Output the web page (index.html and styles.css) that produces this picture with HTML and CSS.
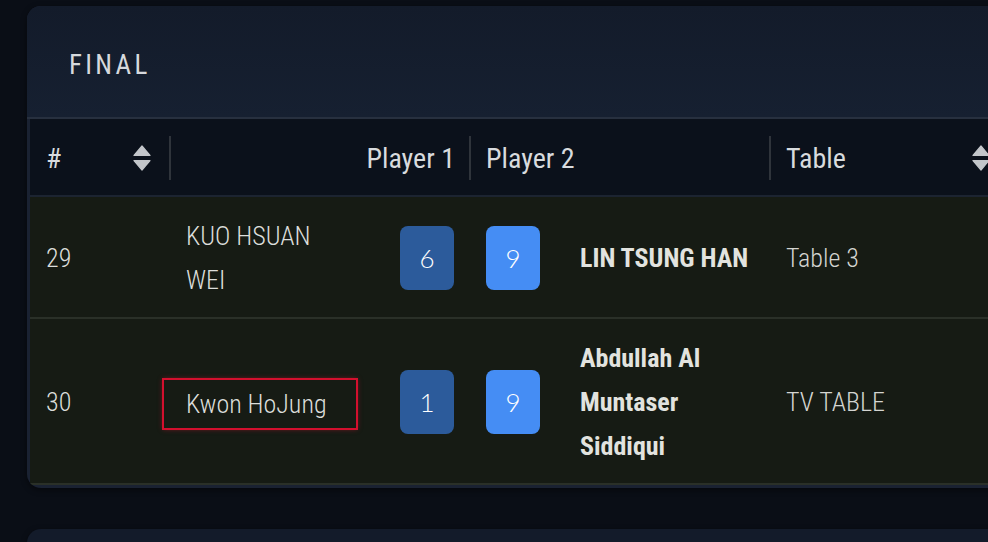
FILE: index.html
```html
<!DOCTYPE html>
<html lang="en">
<head>
<meta charset="utf-8">
<title>Final</title>
<link rel="stylesheet" href="styles.css">
</head>
<body>
<div class="page">
  <section class="card">
    <header class="card-head">
      <h2 class="card-title">FINAL</h2>
    </header>
    <div class="table">
      <div class="thead">
        <div class="th th-num">
          <span>#</span>
          <svg class="sort" viewBox="0 0 18 26" width="18" height="26"><path d="M9 1 L17 10.5 L1 10.5 Z M1 15.5 L17 15.5 L9 25 Z" fill="#c3c6ca" stroke="#c3c6ca" stroke-width="1.2" stroke-linejoin="round"/></svg>
        </div>
        <div class="th th-p1"><span class="th-label">Player 1</span></div>
        <div class="th th-p2"><span class="th-label">Player 2</span></div>
        <div class="th th-tbl">
          <span class="th-label">Table</span>
          <svg class="sort" viewBox="0 0 18 26" width="18" height="26"><path d="M9 1 L17 10.5 L1 10.5 Z M1 15.5 L17 15.5 L9 25 Z" fill="#c3c6ca" stroke="#c3c6ca" stroke-width="1.2" stroke-linejoin="round"/></svg>
        </div>
      </div>

      <div class="tr">
        <div class="td td-num">29</div>
        <div class="td td-p1">
          <div class="name">KUO HSUAN WEI</div>
          <div class="score score-dark">6</div>
        </div>
        <div class="td td-p2">
          <div class="score score-light">9</div>
          <div class="name name-bold">LIN TSUNG HAN</div>
        </div>
        <div class="td td-tbl">Table 3</div>
      </div>

      <div class="tr">
        <div class="td td-num">30</div>
        <div class="td td-p1">
          <div class="name name-highlight">Kwon HoJung</div>
          <div class="score score-dark">1</div>
        </div>
        <div class="td td-p2">
          <div class="score score-light">9</div>
          <div class="name name-bold">Abdullah Al Muntaser Siddiqui</div>
        </div>
        <div class="td td-tbl">TV TABLE</div>
      </div>
    </div>
  </section>
  <section class="card card-next"></section>
</div>
</body>
</html>
```
FILE: styles.css
```css
* { box-sizing: border-box; }

html, body {
  margin: 0;
  padding: 0;
  height: 100%;
}

body {
  background: #0a0e16;
  font-family: "Roboto Condensed", "Liberation Sans Narrow", "Liberation Sans", sans-serif;
  color: #dcdedb;
  overflow: hidden;
}

.page {
  padding: 6px 0 0 27px;
  width: 1100px;
}

.card {
  width: 985px;
  background: #1a2232;
  border-radius: 14px;
  padding: 0 3px 3px 3px;
  box-shadow: 0 2px 6px rgba(0, 0, 0, 0.45);
  overflow: hidden;
}

.card-head {
  height: 113px;
  margin: 0 -3px;
  padding: 6px 0 0 42px;
  display: flex;
  align-items: center;
  background: linear-gradient(180deg, #131b2a 0%, #162031 100%);
  border-bottom: 2px solid #27303f;
}

.card-title {
  margin: 0;
  font-size: 27px;
  font-weight: 400;
  letter-spacing: 3.3px;
  color: #d6d9dd;
}

.table {
  width: 978px;
}

.thead,
.tr {
  display: grid;
  grid-template-columns: 139px 300px 300px 239px;
}

.thead {
  height: 78px;
  padding-top: 2px;
  background: #0b111b;
  border-bottom: 2px solid #1c2431;
  align-items: center;
  font-size: 28px;
  color: #d8dbde;
}

.th {
  height: 44px;
  display: flex;
  align-items: center;
}

.th-num {
  justify-content: space-between;
  padding: 0 18px 0 16px;
}

.th-p1,
.th-p2,
.th-tbl {
  border-left: 2px solid #2f343b;
}

.th-p1 {
  justify-content: flex-end;
  padding-right: 14px;
}

.th-p2 {
  padding-left: 15px;
}

.th-tbl {
  justify-content: space-between;
  padding: 0 18px 0 15px;
}

.sort {
  display: block;
}

.tr {
  background: #161b14;
  border-bottom: 2px solid #2a3028;
  font-size: 26px;
  font-weight: 300;
  line-height: 44px;
}

.td {
  padding: 17px 0 15px;
  display: flex;
  align-items: center;
}

.td-num {
  padding-left: 16px;
}

.td-p1 {
  justify-content: space-between;
  padding-left: 17px;
  padding-right: 15px;
}

.td-p2 {
  padding-left: 17px;
  gap: 40px;
}

.td-tbl {
  padding-left: 17px;
  color: #d4d5d1;
}

.name {
  width: 150px;
}

.name-bold {
  font-weight: 700;
  width: 185px;
  color: #e2e3df;
}

.name-highlight {
  width: 192px;
  margin-left: -22px;
  margin-top: 3px;
  padding: 2px 0 2px 22px;
  outline: 2px solid #d3102e;
  box-shadow: 0 0 5px 1px rgba(230, 20, 50, 0.55);
}

.score {
  flex: none;
  height: 64px;
  min-width: 54px;
  padding: 0 18px;
  border-radius: 8px;
  display: flex;
  align-items: center;
  justify-content: center;
  font-family: "Lato", "Liberation Sans", sans-serif;
  font-weight: 300;
  font-size: 26px;
  color: #ffffff;
}

.score-dark {
  background: #2c5b9b;
}

.score-light {
  background: #458df4;
}

.card-next {
  margin-top: 41px;
  height: 60px;
  background: #131b2a;
  padding: 0;
}
```
